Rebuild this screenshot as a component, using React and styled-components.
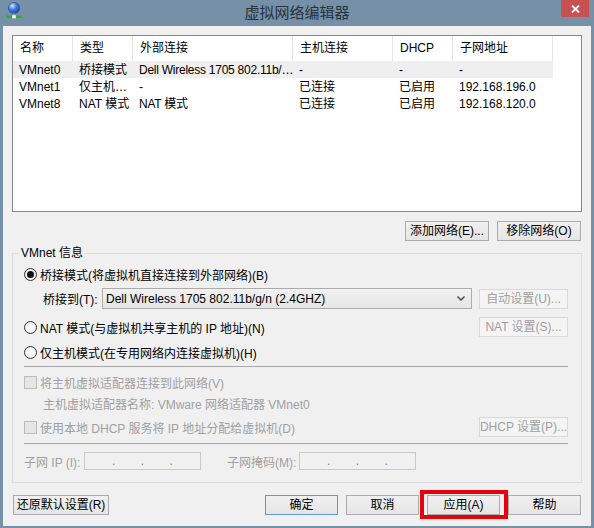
import React from 'react';
import styled, { createGlobalStyle, css } from 'styled-components';

const GlobalStyle = createGlobalStyle`
  html, body { margin: 0; padding: 0; background: #7590a7; }
  body {
    font-family: "Liberation Sans", "Noto Sans CJK SC", "Microsoft YaHei", sans-serif;
    font-size: 12px;
    color: #000;
  }
  * { box-sizing: border-box; }
`;

const Window = styled.div`
  width: 594px;
  height: 528px;
  background: #7590a7;
  padding: 0 3px 2px 3px;
  display: flex;
  flex-direction: column;
`;

const TitleBar = styled.div`
  height: 26px;
  display: grid;
  grid-template-columns: 1fr auto 1fr;
  align-items: start;
`;

const TitleIcon = styled.div`
  padding: 2px 0 0 3px;
  height: 22px;
`;

const TitleText = styled.div`
  font-family: "Noto Sans CJK SC", sans-serif;
  font-size: 15px;
  line-height: 24px;
  color: #263340;
`;

const CloseButton = styled.div`
  justify-self: end;
  margin-right: 2px;
  width: 28px;
  height: 17px;
  background: #c75050;
  color: #fff;
  display: flex;
  align-items: center;
  justify-content: center;
`;

const Client = styled.div`
  flex: 1;
  background: #f0f0f0;
  padding: 9px 9px 0 9px;
  display: flex;
  flex-direction: column;
`;

/* list view */
const ListView = styled.div`
  height: 177px;
  border: 1px solid #828790;
  background: #fff;
  display: grid;
  grid-template-columns: 60px 60px 160px 100px 60px 100px 1fr;
  grid-auto-rows: 17px;
  grid-template-rows: 25px;
  align-content: start;
`;

const HeadCell = styled.div`
  border-right: 1px solid #e5e5e5;
  padding-left: 7px;
  line-height: 24px;
  white-space: nowrap;
  ${(p) => p.$last && css`border-right: none;`}
`;

const Cell = styled.div`
  padding-left: 6px;
  line-height: 18px;
  white-space: nowrap;
  overflow: hidden;
  letter-spacing: ${(p) => (p.$tight ? '-0.25px' : 'normal')};
  background: ${(p) => (p.$selected ? '#efefef' : 'transparent')};
`;

const ButtonRow = styled.div`
  display: flex;
  justify-content: ${(p) => p.$justify || 'flex-end'};
  gap: 8px;
  margin-top: ${(p) => p.$top}px;
  padding: 0 1px;
`;

const Button = styled.div`
  width: ${(p) => p.$w}px;
  height: 20px;
  border: 1px solid ${(p) => (p.$default ? '#5b9bd5' : '#acacac')};
  background: linear-gradient(#f0f0f0, #e5e5e5);
  display: flex;
  align-items: center;
  justify-content: center;
  line-height: 18px;
  white-space: nowrap;
  position: relative;
  ${(p) =>
    p.$disabled &&
    css`
      border-color: #d9d9d9;
      background: #f4f4f4;
      color: #a0a0a0;
    `}
`;

const Highlight = styled.div`
  position: absolute;
  top: -6px;
  bottom: -5px;
  left: -8px;
  right: -9px;
  border: 4px solid #e8000b;
  pointer-events: none;
`;

const ButtonGroup = styled.div`
  display: flex;
  gap: 8px;
`;

/* group box */
const GroupBox = styled.div`
  position: relative;
  margin-top: 12px;
  border: 1px solid #dcdcdc;
  padding: 0 13px 12px 11px;
  display: flex;
  flex-direction: column;
`;

const Legend = styled.div`
  position: absolute;
  top: -9px;
  left: 6px;
  padding: 0 2px;
  background: #f0f0f0;
  line-height: 17px;
`;

const Row = styled.div`
  display: flex;
  align-items: center;
  height: ${(p) => p.$h}px;
  margin-top: ${(p) => p.$top}px;
  padding-left: ${(p) => p.$indent || 0}px;
  color: ${(p) => (p.$disabled ? '#a0a0a0' : '#000')};
  white-space: nowrap;
`;

const Spacer = styled.div`
  flex: 1;
`;

const Radio = styled.span`
  width: 13px;
  height: 13px;
  border-radius: 50%;
  border: 1px solid #333;
  background: radial-gradient(circle, #fff 0%, #e8e8e8 100%);
  margin-right: 3px;
  display: inline-flex;
  align-items: center;
  justify-content: center;
  flex-shrink: 0;
  &::after {
    content: '';
    width: 7px;
    height: 7px;
    border-radius: 50%;
    background: ${(p) => (p.$checked ? '#111' : 'transparent')};
  }
`;

const CheckBox = styled.span`
  width: 13px;
  height: 13px;
  border: 1px solid #bcbcbc;
  background: #e6e6e6;
  margin-right: 3px;
  flex-shrink: 0;
`;

const Separator = styled.div`
  margin-top: ${(p) => p.$top}px;
  height: 1px;
  background: #a8a8a8;
`;

const FieldLabel = styled.span`
  width: ${(p) => p.$w}px;
  flex-shrink: 0;
`;

const Select = styled.div`
  width: 370px;
  height: 21px;
  border: 1px solid #acacac;
  background: linear-gradient(#f2f2f2, #e5e5e5);
  display: flex;
  align-items: center;
  padding: 0 6px 0 3px;
  margin-right: 7px;
  & > span { flex: 1; }
`;

const IpBox = styled.div`
  width: 117px;
  height: 18px;
  border: 1px solid #c8c8c8;
  background: #f0f0f0;
  display: flex;
  align-items: center;
  color: #7a7a7a;
  & > i { flex: 1; }
  & > b { font-weight: normal; width: 0; display: flex; justify-content: center; }
`;

const columns = ['名称', '类型', '外部连接', '主机连接', 'DHCP', '子网地址'];
const rows = [
  ['VMnet0', '桥接模式', 'Dell Wireless 1705 802.11b/…', '-', '-', '-'],
  ['VMnet1', '仅主机…', '-', '已连接', '已启用', '192.168.196.0'],
  ['VMnet8', 'NAT 模式', 'NAT 模式', '已连接', '已启用', '192.168.120.0'],
];

const AppIcon = () => (
  <svg width="16" height="18" viewBox="0 0 16 18">
    <defs>
      <radialGradient id="g" cx="0.35" cy="0.3" r="0.8">
        <stop offset="0" stopColor="#cfe6ff" />
        <stop offset="0.45" stopColor="#3f7fe0" />
        <stop offset="1" stopColor="#1a3f9a" />
      </radialGradient>
    </defs>
    <circle cx="8" cy="6" r="5.6" fill="url(#g)" stroke="#24408a" strokeWidth="0.6" />
    <rect x="7" y="11.5" width="2" height="2" fill="#999" />
    <rect x="0.5" y="13.5" width="15" height="2.5" fill="#22b422" />
    <rect x="6" y="13" width="4" height="3.5" fill="#fff" stroke="#888" strokeWidth="0.5" />
  </svg>
);

const IpField = () => (
  <IpBox>
    <i /><b>.</b><i /><b>.</b><i /><b>.</b><i />
  </IpBox>
);

export default function App() {
  return (
    <Window>
      <GlobalStyle />
      <TitleBar>
        <TitleIcon><AppIcon /></TitleIcon>
        <TitleText>虚拟网络编辑器</TitleText>
        <CloseButton>
          <svg width="9" height="8" viewBox="0 0 9 8">
            <path d="M1 0.5 L8 7.5 M8 0.5 L1 7.5" stroke="#fff" strokeWidth="1.8" />
          </svg>
        </CloseButton>
      </TitleBar>
      <Client>
        <ListView>
          {columns.map((c) => (
            <HeadCell key={c}>{c}</HeadCell>
          ))}
          <HeadCell $last />
          {rows.map((r, i) => (
            <React.Fragment key={r[0]}>
              {r.map((v, j) => (
                <Cell key={j} $selected={i === 0} $tight={j === 2}>{v}</Cell>
              ))}
              <Cell />
            </React.Fragment>
          ))}
        </ListView>

        <ButtonRow $top={9}>
          <Button $w={84}>添加网络(E)...</Button>
          <Button $w={84}>移除网络(O)</Button>
        </ButtonRow>

        <GroupBox>
          <Legend>VMnet 信息</Legend>
          <Row $h={18} $top={11}>
            <Radio $checked />桥接模式(将虚拟机直接连接到外部网络)(B)
          </Row>
          <Row $h={21} $top={5} $indent={19}>
            <FieldLabel $w={59}>桥接到(T):</FieldLabel>
            <Select>
              <span>Dell Wireless 1705 802.11b/g/n (2.4GHZ)</span>
              <svg width="8" height="5" viewBox="0 0 8 5">
                <path d="M0.5 0.5 L4 4 L7.5 0.5" fill="none" stroke="#444" strokeWidth="1.4" />
              </svg>
            </Select>
            <Button $w={89} $disabled>自动设置(U)...</Button>
          </Row>
          <Row $h={20} $top={8}>
            <Radio />NAT 模式(与虚拟机共享主机的 IP 地址)(N)
            <Spacer />
            <Button $w={89} $disabled>NAT 设置(S)...</Button>
          </Row>
          <Row $h={18} $top={6}>
            <Radio />仅主机模式(在专用网络内连接虚拟机)(H)
          </Row>
          <Separator $top={5} />
          <Row $h={18} $top={6} $disabled>
            <CheckBox />将主机虚拟适配器连接到此网络(V)
          </Row>
          <Row $h={18} $top={3} $indent={19} $disabled>
            主机虚拟适配器名称: VMware 网络适配器 VMnet0
          </Row>
          <Row $h={20} $top={5} $disabled>
            <CheckBox />使用本地 DHCP 服务将 IP 地址分配给虚拟机(D)
            <Spacer />
            <Button $w={89} $disabled>DHCP 设置(P)...</Button>
          </Row>
          <Separator $top={6} />
          <Row $h={18} $top={8} $disabled>
            <FieldLabel $w={60}>子网 IP (I):</FieldLabel>
            <IpField />
            <FieldLabel $w={26} />
            <FieldLabel $w={72}>子网掩码(M):</FieldLabel>
            <IpField />
          </Row>
        </GroupBox>

        <ButtonRow $top={12} $justify="space-between">
          <Button $w={96}>还原默认设置(R)</Button>
          <ButtonGroup>
            <Button $w={73} $default>确定</Button>
            <Button $w={73}>取消</Button>
            <Button $w={73}>
              应用(A)
              <Highlight />
            </Button>
            <Button $w={73}>帮助</Button>
          </ButtonGroup>
        </ButtonRow>
      </Client>
    </Window>
  );
}
